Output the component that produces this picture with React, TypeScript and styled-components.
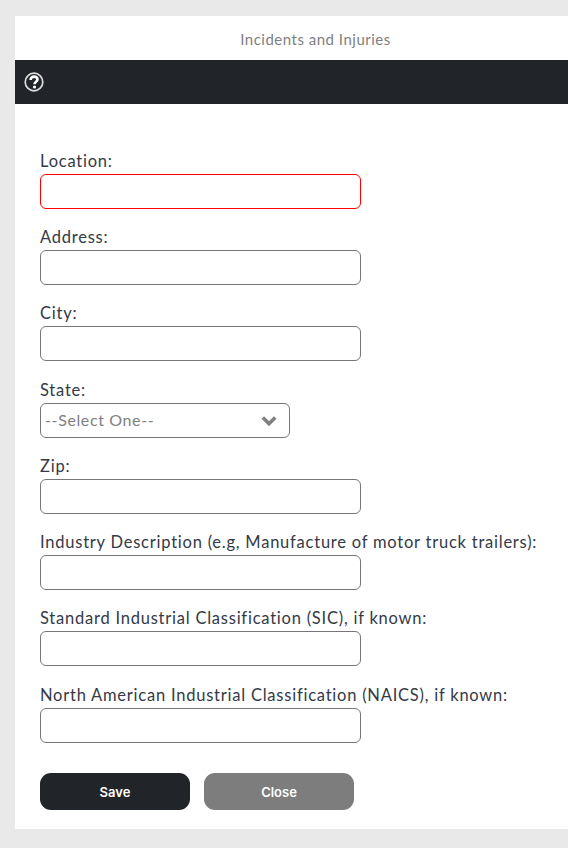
import styled, { createGlobalStyle } from 'styled-components';

const GlobalStyle = createGlobalStyle`
    html, body {
        margin: 0;
        height: 100%;
        background: #e9e9e9;
        overflow: hidden;
    }
`;

const Page = styled.div`
    padding: 16px 0 0 15px;
`;

const Card = styled.div`
    height: 813px;
    background: #fff;
`;

const Title = styled.div`
    height: 44px;
    box-sizing: border-box;
    display: flex;
    align-items: center;
    justify-content: center;
    padding: 1px 0 0 48px;
    font-family: "Lato", sans-serif;
    font-size: 15px;
    letter-spacing: 0.5px;
    color: #7f7f7f;
`;

const HelpBar = styled.div`
    height: 44px;
    background: #212428;
    display: flex;
    align-items: center;
    padding-left: 9px;
`;

const Form = styled.form`
    padding: 48.65px 0 0 25px;
    display: flex;
    flex-direction: column;
`;

const Field = styled.div`
    height: 76.3px;
    display: flex;
    flex-direction: column;
`;

const Label = styled.label`
    font-family: "Lato", sans-serif;
    font-size: 16.5px;
    line-height: 16px;
    height: 21px;
    letter-spacing: 0.77px;
    color: #343a46;
    white-space: nowrap;
`;

const TextInput = styled.input<{ $invalid?: boolean }>`
    width: 321px;
    height: 35px;
    box-sizing: border-box;
    border: 1px solid ${(p) => (p.$invalid ? '#ff0000' : '#767676')};
    border-radius: 6px;
    background: #fff;
    outline: none;
`;

const SelectBox = styled.div`
    width: 250px;
    height: 35px;
    box-sizing: border-box;
    border: 1px solid #767676;
    border-radius: 6px;
    display: flex;
    align-items: center;
    justify-content: space-between;
    padding: 0 12px 2px 4px;
    font-family: "Lato", sans-serif;
    font-size: 16px;
    letter-spacing: 0.62px;
    color: #7f7f7f;
`;

const Chevron = styled.svg`
    margin-top: 3px;
`;

const Buttons = styled.div`
    display: flex;
    gap: 14px;
    margin-top: 10px;
`;

const Button = styled.button<{ $secondary?: boolean }>`
    width: 150px;
    height: 37px;
    border: none;
    border-radius: 11px;
    background: ${(p) => (p.$secondary ? '#7d7d7d' : '#212428')};
    color: #fff;
    font-family: "Inter", sans-serif;
    font-size: 13px;
    font-weight: 600;
`;

function HelpIcon() {
    return (
        <svg width="20" height="20" viewBox="0 0 20 20" fill="none">
            <circle cx="10" cy="10" r="8.8" stroke="#dcdcdc" strokeWidth="1.7" />
            <path
                d="M6.6 7.9C6.6 5.7 8.1 4.6 10.1 4.6C12.1 4.6 13.5 5.7 13.5 7.4C13.5 9.7 10.5 9.8 10.5 12.2"
                stroke="#fff"
                strokeWidth="2.6"
            />
            <circle cx="10.5" cy="15" r="1.6" fill="#fff" />
        </svg>
    );
}

function ChevronIcon() {
    return (
        <Chevron width="16" height="12" viewBox="0 0 16 12" fill="none">
            <path d="M1.8 2.6L8 8.8L14.2 2.6" stroke="#808080" strokeWidth="3.6" />
        </Chevron>
    );
}

const textFields = [
    { label: 'Location:', invalid: true },
    { label: 'Address:' },
    { label: 'City:' },
];

const lowerFields = [
    'Zip:',
    'Industry Description (e.g, Manufacture of motor truck trailers):',
    'Standard Industrial Classification (SIC), if known:',
    'North American Industrial Classification (NAICS), if known:',
];

export default function App() {
    return (
        <Page>
            <GlobalStyle />
            <Card>
                <Title>Incidents and Injuries</Title>
                <HelpBar>
                    <HelpIcon />
                </HelpBar>
                <Form>
                    {textFields.map((f) => (
                        <Field key={f.label}>
                            <Label>{f.label}</Label>
                            <TextInput $invalid={f.invalid} />
                        </Field>
                    ))}
                    <Field>
                        <Label>State:</Label>
                        <SelectBox>
                            --Select One--
                            <ChevronIcon />
                        </SelectBox>
                    </Field>
                    {lowerFields.map((label) => (
                        <Field key={label}>
                            <Label>{label}</Label>
                            <TextInput />
                        </Field>
                    ))}
                    <Buttons>
                        <Button type="button">Save</Button>
                        <Button type="button" $secondary>
                            Close
                        </Button>
                    </Buttons>
                </Form>
            </Card>
        </Page>
    );
}
